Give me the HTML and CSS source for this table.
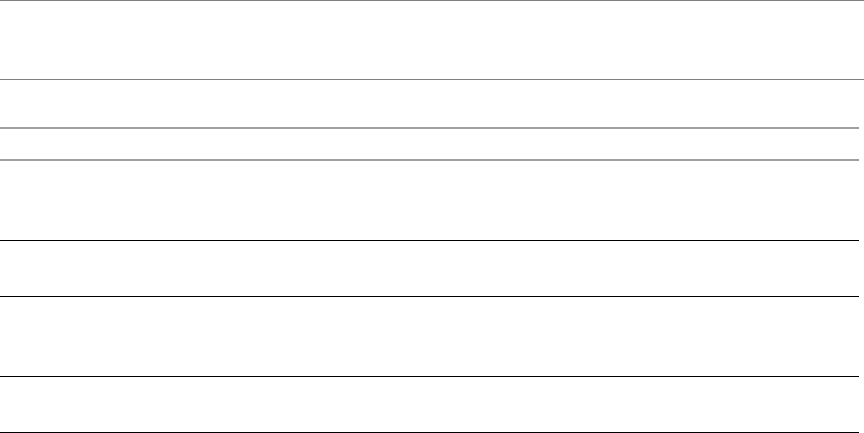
FILE: index.html
```html
<!DOCTYPE html>
<html>
<head>
<meta charset="utf-8">
<link rel="stylesheet" href="styles.css">
</head>
<body>
<div class="top"></div>
<div class="list">
  <div class="head"></div>
  <div class="row tall"></div>
  <div class="row short"></div>
  <div class="row tall"></div>
  <div class="row short"></div>
</div>
</body>
</html>
```
FILE: styles.css
```css
html, body {
  margin: 0;
  padding: 0;
  background: #ffffff;
  font-family: "Liberation Sans", Arial, sans-serif;
}
.top {
  height: 78px;
  border-top: 1px solid #808080;
  border-bottom: 1px solid #808080;
}
.list {
  width: 859px;
  padding-top: 47px;
}
.head {
  height: 30px;
  border-top: 2px solid #a0a0a0;
  border-bottom: 2px solid #a0a0a0;
}
.row {
  border-bottom: 1px solid #000000;
}
.row.tall {
  height: 79px;
}
.row.short {
  height: 55px;
}
```
